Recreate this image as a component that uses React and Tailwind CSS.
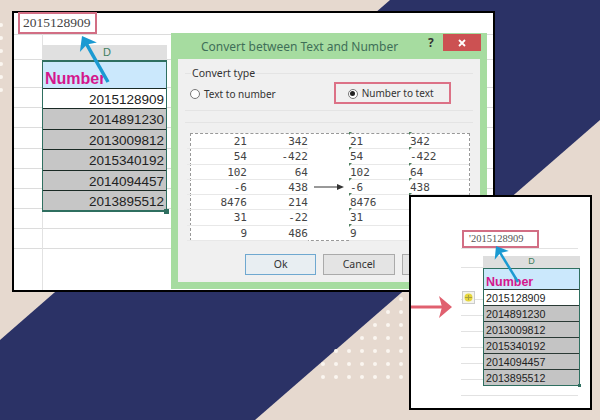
const MAIN_ROWS = ['2015128909', '2014891230', '2013009812', '2015340192', '2014094457', '2013895512'];
const SAMPLE = [
  ['21', '342'],
  ['54', '-422'],
  ['102', '64'],
  ['-6', '438'],
  ['8476', '214'],
  ['31', '-22'],
  ['9', '486'],
];
const DOT_STARTS = [6, 5, 4, 3, 1, 0, 0];

// Blue pointer arrow, drawn from tail to head
function BlueArrow({ className, x1, y1, x2, y2, width, head }) {
  const a = Math.atan2(y2 - y1, x2 - x1);
  const pt = (d, off) => [
    x2 - Math.cos(a) * d - Math.sin(a) * off,
    y2 - Math.sin(a) * d + Math.cos(a) * off,
  ].join(',');
  return (
    <svg className={className} viewBox="0 0 60 60" fill="none">
      <line x1={x1} y1={y1} x2={x2 - Math.cos(a) * head * 0.6} y2={y2 - Math.sin(a) * head * 0.6} stroke="#1b9ad2" strokeWidth={width} />
      <polygon points={`${x2},${y2} ${pt(head, head * 0.75)} ${pt(head * 0.75, 0)} ${pt(head, -head * 0.75)}`} fill="#1b9ad2" />
    </svg>
  );
}

function GridLines({ rows }) {
  return (
    <div className="absolute inset-0 flex flex-col">
      {rows.map((h, i) => (
        <div key={i} className="border-b border-[#dcdcdc]" style={{ height: h }}></div>
      ))}
    </div>
  );
}

function Dots({ className, rows, cols, startOf }) {
  const items = [];
  for (let r = 0; r < rows; r++) {
    for (let c = startOf(r); c < cols; c++) {
      items.push(
        <div key={`${r}-${c}`} className="size-[4px] rounded-full bg-[#fbf6f0]" style={{ gridRow: r + 1, gridColumn: c + 1 }}></div>
      );
    }
  }
  return <div className={`absolute grid gap-[9px] ${className}`}>{items}</div>;
}

function TextCell({ value, right }) {
  if (right) {
    return <div className="h-[14.3px] w-[60px] text-right leading-[15.3px]">{value}</div>;
  }
  return (
    <div className="relative h-[14.3px] w-[60px] pl-[1px] leading-[16px]">
      <div className="absolute left-0 top-[-2px] size-0 border-t-[3px] border-r-[3px] border-t-[#4f7f5f] border-r-transparent"></div>
      {value}
    </div>
  );
}

function Dialog() {
  return (
    <div className="absolute left-[171px] top-[33px] flex h-[256px] w-[316px] flex-col bg-[#a6dca0] px-[7px] pb-[7px] font-['Noto_Sans',sans-serif] text-[#333]">
      <div className="relative flex h-[26px] shrink-0 items-center pl-[23px] pt-[2px] text-[12px] text-[#3f6f58]">
        Convert between Text and Number
        <span className="absolute left-[250px] top-[1px] text-[12px] font-bold text-[#333]">?</span>
        <div className="absolute right-[-1px] top-[1px] flex h-[17px] w-[38px] items-center justify-center bg-[#cc5152]">
          <svg width="8" height="8" viewBox="0 0 8 8">
            <path d="M1 1 7 7M7 1 1 7" stroke="#fff" strokeWidth="1.8" />
          </svg>
        </div>
      </div>
      <div className="flex flex-1 flex-col bg-[#f0f0f0] px-[7px] pt-[14px]">
        <div className="relative flex h-[38px] shrink-0 items-center border-y border-[#e4e4e4] pl-[5px] text-[10px]">
          <span className="absolute left-[6px] top-[-8px] bg-[#f0f0f0] px-[1px] text-[10.5px] leading-[14px]">Convert type</span>
          <div className="mt-[4px] flex items-center gap-[4px]">
            <div className="size-[10px] rounded-full border border-[#777] bg-white"></div>
            <span>Text to number</span>
          </div>
          <div className="ml-[58px] mt-[1px] flex h-[22px] w-[117px] items-center gap-[4px] border-2 border-[#dc7186] pl-[12px] pt-[2px]">
            <div className="flex size-[10px] items-center justify-center rounded-full border border-[#777] bg-white">
              <div className="size-[5px] rounded-full bg-[#222]"></div>
            </div>
            <span>Number to text</span>
          </div>
        </div>
        <div className="mt-[11px] flex h-[122px] shrink-0 flex-col border-t border-[#e4e4e4] px-[5px] pt-[10px]">
          <div className="flex h-[108px] w-[280px] border border-dashed border-[#999] bg-white font-['DejaVu_Sans_Mono',monospace] text-[11px] text-[#444]">
            <div className="ml-[-4px] flex flex-col">
              {SAMPLE.map((r) => (
                <div key={r[0]} className="flex border-b border-[#e8e8e8]">
                  <TextCell value={r[0]} right />
                  <div className="w-[1px]"></div>
                  <TextCell value={r[1]} right />
                </div>
              ))}
            </div>
            <div className="flex w-[41px] items-center justify-center">
              <svg width="30" height="8" viewBox="0 0 30 8" className="mt-[-1px]">
                <path d="M0 4H25" stroke="#333" strokeWidth="1" />
                <path d="M30 4 23 1V7Z" fill="#333" />
              </svg>
            </div>
            <div className="flex flex-col">
              {SAMPLE.map((r) => (
                <div key={r[0]} className="flex border-b border-[#e8e8e8]">
                  <TextCell value={r[0]} />
                  <TextCell value={r[1]} />
                </div>
              ))}
            </div>
          </div>
        </div>
        <div className="mt-[10px] flex gap-[7px] pl-[60px] text-[10.5px]">
          <div className="flex h-[21px] w-[72px] items-center justify-center border border-[#6fa8d0] bg-[#e8eef2]">Ok</div>
          <div className="flex h-[21px] w-[72px] items-center justify-center border border-[#aaa] bg-[#e4e4e4]">Cancel</div>
          <div className="h-[21px] w-[72px] border border-[#aaa] bg-[#e4e4e4]"></div>
        </div>
      </div>
    </div>
  );
}

function MainWindow() {
  return (
    <div className="absolute left-[12px] top-[11px] h-[281px] w-[483px] border-2 border-black bg-white">
      <GridLines rows={[22, 25, 28, 20, 20, 21, 20, 20, 20, 20, 20]} />
      <div className="absolute left-[28px] top-0 h-full w-[1px] bg-[#e2e2e2]"></div>
      <div className="relative ml-[4px] mt-[-1px] flex h-[22px] w-[79px] items-center border-2 border-[#d26e84] bg-white pl-[3px] font-['Liberation_Serif',serif] text-[13.5px] text-[#444]">
        2015128909
      </div>
      <div className="relative ml-[28px] mt-[11px] w-[125px]">
        <div className="flex h-[15px] items-center justify-center bg-[#e0e0e0] pl-[5px] font-['Liberation_Sans',sans-serif] text-[11px] text-[#3f7f60]">D</div>
        <div className="flex h-[28px] items-end border-x border-t-2 border-x-[#2f6f60] border-t-[#2f6f60] bg-[#cbe8fc] pl-[2px] font-['Liberation_Sans',sans-serif] text-[16px] font-bold leading-[19px] text-[#d4178c]">Number</div>
        <div className="flex flex-col border-x border-b-2 border-[#2f6f60] font-['Liberation_Sans',sans-serif] text-[13.5px] text-[#222]">
          {MAIN_ROWS.map((n, i) => (
            <div key={n} className={`h-[20.4px] border-t border-[#1a2a25] pr-[2px] text-right leading-[22px] ${i === 0 ? 'bg-white' : 'bg-[#c6c6c6]'}`}>
              {n}
            </div>
          ))}
        </div>
        <div className="absolute bottom-[-2px] right-[-2px] size-[5px] bg-[#2f6f60]"></div>
      </div>
      <BlueArrow className="absolute left-[58px] top-[20px] size-[60px]" x1={36} y1={49} x2={10} y2={3} width={3.5} head={13} />
    </div>
  );
}

function InsetWindow() {
  return (
    <div className="absolute left-[409px] top-[195px] h-[215px] w-[183px] border-2 border-black bg-white">
      <div className="absolute left-[50px] right-[12px] top-[35px] flex flex-col">
        {[17, 19, 32, 16, 16, 16, 16, 16, 16].map((h, i) => (
          <div key={i} className="border-b border-[#e2e2e2]" style={{ height: h }}></div>
        ))}
      </div>
      <div className="relative ml-[51px] mt-[33px] flex h-[18px] w-[77px] items-center border-2 border-[#d26e84] bg-white pl-[5px] font-['Liberation_Serif',serif] text-[10.5px] text-[#555]">
        '2015128909
      </div>
      <div className="relative ml-[72px] mt-[8px] w-[97px] font-['Liberation_Sans',sans-serif]">
        <div className="flex h-[12px] items-center justify-center bg-[#dedede] text-[9px] text-[#3f7f60]">D</div>
        <div className="flex h-[21px] items-end border-x border-t border-[#2f6f60] bg-[#cbe8fc] pl-[2px] text-[12.5px] font-bold leading-[13px] text-[#d4178c]">Number</div>
        <div className="flex flex-col border-x border-b border-[#2f6f60] text-[10.7px] text-[#222]">
          {MAIN_ROWS.map((n, i) => (
            <div key={n} className={`h-[16px] border-t border-[#2a3a35] pl-[2px] leading-[17px] ${i === 0 ? 'bg-white' : 'bg-[#c4c4c4]'}`}>
              {n}
            </div>
          ))}
        </div>
        <div className="absolute bottom-[-1px] right-[-1px] size-[3px] bg-[#2f6f60]"></div>
      </div>
      <div className="absolute left-[51px] top-[94px] flex size-[13px] items-center justify-center border border-[#ccc] bg-[#f4f4ec]">
        <svg width="9" height="9" viewBox="0 0 9 9">
          <circle cx="4.5" cy="4.5" r="4" fill="#e6d63c" />
          <path d="M1 4.5H8M4.5 2V7" stroke="#a8a040" strokeWidth="1" />
        </svg>
      </div>
      <BlueArrow className="absolute left-[76px] top-[46px] size-[60px]" x1={31} y1={39} x2={9} y2={3} width={2.5} head={11} />
      <svg className="absolute left-0 top-[98px]" width="42" height="24" viewBox="0 0 42 24">
        <path d="M0 10.5H32V13.5H0Z" fill="#e0606f" />
        <path d="M41 12 28 1 31 12 28 23Z" fill="#e0606f" />
      </svg>
    </div>
  );
}

export default function App() {
  return (
    <div className="relative h-[420px] w-[600px] overflow-hidden bg-[#e6d9cf]">
      <svg className="absolute inset-0" width="600" height="420" viewBox="0 0 600 420">
        <polygon points="390,0 600,0 600,120 255,420 0,420 0,340" fill="#2b3266" />
      </svg>
      <Dots className="left-[-1px] top-[23px] grid-cols-[repeat(2,4px)]" rows={6} cols={2} startOf={() => 0} />
      <Dots
        className="left-[321px] top-[297px] grid-cols-[repeat(7,4px)]"
        rows={7}
        cols={7}
        startOf={(r) => DOT_STARTS[r]}
      />
      <MainWindow />
      <Dialog />
      <InsetWindow />
    </div>
  );
}
